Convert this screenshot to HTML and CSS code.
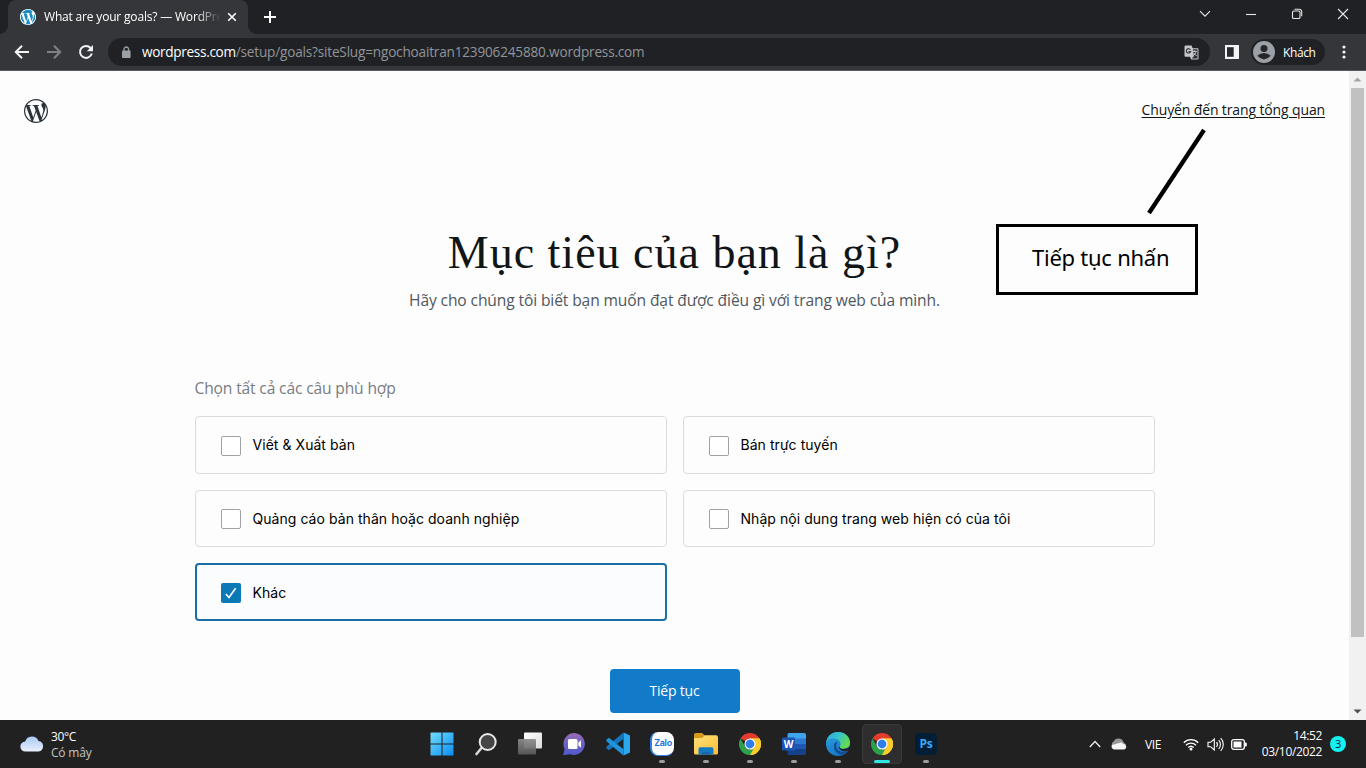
FILE: index.html
```html
<!DOCTYPE html>
<html lang="vi">
<head>
<meta charset="utf-8">
<title>What are your goals? — WordPress.com</title>
<link rel="stylesheet" href="styles.css">
</head>
<body>
<svg class="defs" width="0" height="0" aria-hidden="true">
  <defs>
    <symbol id="wp" viewBox="0 0 24 24"><path d="M21.469 6.825c.84 1.537 1.318 3.3 1.318 5.175 0 3.979-2.156 7.456-5.363 9.325l3.295-9.527c.615-1.54.82-2.771.82-3.864 0-.405-.026-.78-.07-1.11m-7.981.105c.647-.03 1.232-.105 1.232-.105.582-.075.514-.93-.067-.899 0 0-1.755.135-2.88.135-1.064 0-2.85-.15-2.85-.15-.585-.03-.661.855-.075.885 0 0 .54.061 1.125.09l1.68 4.605-2.37 7.08L5.354 6.9c.649-.03 1.234-.1 1.234-.1.585-.075.516-.93-.065-.896 0 0-1.746.138-2.874.138-.2 0-.438-.008-.69-.015C4.911 3.15 8.235 1.215 12 1.215c2.809 0 5.365 1.072 7.286 2.833-.046-.003-.091-.009-.141-.009-1.06 0-1.812.923-1.812 1.914 0 .89.513 1.643 1.06 2.531.411.72.89 1.643.89 2.977 0 .915-.354 1.994-.821 3.479l-1.075 3.585-3.9-11.61.001.014zM12 22.784c-1.059 0-2.081-.153-3.048-.437l3.237-9.406 3.315 9.087c.024.053.05.101.078.149-1.12.393-2.325.609-3.582.609M1.211 12c0-1.564.336-3.05.935-4.39L7.29 21.709C3.694 19.96 1.212 16.271 1.211 12M12 0C5.385 0 0 5.385 0 12s5.385 12 12 12 12-5.385 12-12S18.615 0 12 0"/></symbol>
    <symbol id="chrome" viewBox="0 0 24 24">
      <path fill="#e33b2e" d="M12 12 1.6 6A12 12 0 0 1 22.4 6Z"/>
      <path fill="#fccb2d" d="M12 12V6h10.4A12 12 0 0 1 12 24Z"/>
      <path fill="#fccb2d" d="M17.2 15 12 24 A12 12 0 0 0 22.4 6H12Z"/>
      <path fill="#2da04b" d="M1.6 6 6.8 15A6 6 0 0 0 12 18l4-.6.8-1.8L12 24A12 12 0 0 1 1.6 6Z"/>
      <circle cx="12" cy="12" r="6" fill="#fff"/><circle cx="12" cy="12" r="4.8" fill="#2f7de9"/>
    </symbol>
    <linearGradient id="win" x1="0" y1="0" x2="1" y2="1"><stop offset="0" stop-color="#72ddff"/><stop offset="1" stop-color="#0a8df0"/></linearGradient>
    <linearGradient id="tv1" x1="0" y1="0" x2="1" y2="1"><stop offset="0" stop-color="#fff"/><stop offset="1" stop-color="#dcdcdc"/></linearGradient>
    <linearGradient id="tv2" x1="0" y1="0" x2="0" y2="1"><stop offset="0" stop-color="#8c8c8c"/><stop offset="1" stop-color="#5a5a5a"/></linearGradient>
    <linearGradient id="chat" x1="0" y1="0" x2="0" y2="1"><stop offset="0" stop-color="#9c6bb0"/><stop offset=".5" stop-color="#6a62c6"/><stop offset="1" stop-color="#5259c8"/></linearGradient>
    <linearGradient id="cloud" x1="0" y1="0" x2="0" y2="1"><stop offset="0" stop-color="#a9c8f5"/><stop offset="1" stop-color="#e9f0fb"/></linearGradient>
    <linearGradient id="fold" x1="0" y1="0" x2="1" y2="1"><stop offset="0" stop-color="#ffe07c"/><stop offset="1" stop-color="#f9bf33"/></linearGradient>
    <linearGradient id="edgeTop" x1="0" y1="0" x2="1" y2=".5"><stop offset="0" stop-color="#2ba7e0"/><stop offset=".5" stop-color="#35c3cb"/><stop offset="1" stop-color="#66dc4f"/></linearGradient>
    <linearGradient id="edgeBody" x1="0" y1="0" x2=".6" y2="1"><stop offset="0" stop-color="#2aa3e3"/><stop offset="1" stop-color="#1673c7"/></linearGradient>
  </defs>
</svg>

<div class="screen">
  <div class="tabbar">
    <div class="tab">
      <span class="favicon"><svg width="16" height="16"><use href="#wp"/></svg></span>
      <span class="tab-title">What are your goals? — WordPre</span>
      <svg class="tab-close" width="10" height="10" viewBox="0 0 10 10"><path d="m1.2 1.2 7.6 7.6M8.8 1.2 1.2 8.8"/></svg>
    </div>
    <svg class="tab-new" width="12" height="12" viewBox="0 0 12 12"><path d="M6 0v12M0 6h12"/></svg>
    <div class="win-controls">
      <svg width="12" height="12" viewBox="0 0 12 12"><path d="m1 3.2 5 5 5-5"/></svg>
      <svg width="12" height="12" viewBox="0 0 12 12"><path d="M1 6.5h10"/></svg>
      <svg width="12" height="12" viewBox="0 0 12 12"><rect x="1.5" y="3" width="7.5" height="7.5" rx="1.3"/><path d="M3.5 1.2h4.7a2.5 2.5 0 0 1 2.5 2.5v4.6"/></svg>
      <svg width="12" height="12" viewBox="0 0 12 12"><path d="m1 1 10 10M11 1 1 11"/></svg>
    </div>
  </div>

  <div class="toolbar">
    <div class="nav">
      <svg width="16" height="16" viewBox="0 0 16 16"><path d="M15 8H2M8 1.8 1.8 8 8 14.2"/></svg>
      <svg class="dim" width="16" height="16" viewBox="0 0 16 16"><path d="M1 8h13M8 1.8 14.2 8 8 14.2"/></svg>
      <svg width="16" height="16" viewBox="0 0 16 16"><path d="M13.8 9.5A6 6 0 1 1 12.6 4"/><path class="solid" d="M15 1v6.2H8.8z"/></svg>
    </div>
    <div class="address">
      <svg class="lock" width="10" height="13" viewBox="0 0 10 13"><rect x="1" y="4.5" width="8.6" height="7.5" rx="1"/><path d="M3 5V3.3a2.3 2.3 0 0 1 4.6 0V5"/></svg>
      <span class="url"><b>wordpress.com</b>/setup/goals?siteSlug=ngochoaitran123906245880.wordpress.com</span>
      <svg class="translate" width="15" height="15" viewBox="0 0 15 15"><path fill="#c3c6ca" d="M1.5.5h6l1.2 2.7h4.8a1 1 0 0 1 1 1v9.3a1 1 0 0 1-1 1H7.2L6 11.800H1.500a1 1 0 0 1-1-1V1.500a1 1 0 0 1 1-1z"/><path fill="#303135" d="M9 4.200h4.500v9.300H7.800l2-2.200z"/><path fill="none" stroke="#303135" stroke-width="1.100" d="M6.400 4.700A2.200 2.200 0 1 0 6.600 6.600H4.600"/><path fill="none" stroke="#c3c6ca" d="M8.700 6.400h4.100M10.700 5.200v1.200M12 6.500c-.4 2-1.700 3.300-3 4.300M9.700 8l3 3"/></svg>
    </div>
    <svg class="panel" width="14" height="14" viewBox="0 0 14 14"><rect width="14" height="14" fill="#f4f5f6"/><rect x="2" y="2.200" width="6.700" height="9.600" fill="#292a2d"/></svg>
    <div class="profile">
      <svg width="22" height="22" viewBox="0 0 22 22"><circle cx="11" cy="11" r="11" fill="#9aa0a6"/><circle cx="11" cy="7.500" r="3.500" fill="#25262a"/><path d="M4.200 14.800Q11 9.300 17.800 14.800 11 22 4.200 14.800Z" fill="#25262a"/></svg>
      <span>Khách</span>
    </div>
    <svg class="dots" width="4" height="14" viewBox="0 0 4 14"><circle cx="2" cy="2" r="1.600"/><circle cx="2" cy="7" r="1.600"/><circle cx="2" cy="12" r="1.600"/></svg>
  </div>

  <div class="viewport">
    <main class="page">
      <header class="page-head">
        <svg class="logo" width="24" height="24"><use href="#wp"/></svg>
        <a class="skip">Chuyển đến trang tổng quan</a>
      </header>
      <h1 class="title">Mục tiêu của bạn là gì?</h1>
      <p class="subtitle">Hãy cho chúng tôi biết bạn muốn đạt được điều gì với trang web của mình.</p>
      <section class="goals">
        <p class="hint">Chọn tất cả các câu phù hợp</p>
        <div class="grid">
          <div class="goal"><span class="box"></span><span>Viết &amp; Xuất bản</span></div>
          <div class="goal"><span class="box"></span><span>Bán trực tuyến</span></div>
          <div class="goal"><span class="box"></span><span class="label-low">Quảng cáo bản thân hoặc doanh nghiệp</span></div>
          <div class="goal"><span class="box"></span><span class="label-low">Nhập nội dung trang web hiện có của tôi</span></div>
          <div class="goal selected"><span class="box checked"><svg width="14" height="14" viewBox="0 0 14 14"><path d="M1.800 8 5 11.500 11.600 2.300"/></svg></span><span class="label-low">Khác</span></div>
        </div>
      </section>
      <button class="continue">Tiếp tục</button>
    </main>
    <div class="scrollbar">
      <svg width="9" height="5" viewBox="0 0 9 5"><path d="M.5 4.500h8L4.500.5z" fill="#a3a3a3"/></svg>
      <div class="thumb"></div>
      <svg class="down" width="9" height="5" viewBox="0 0 9 5"><path d="M.5.500h8l-4 4z" fill="#505050"/></svg>
    </div>
    <svg class="pointer" width="64" height="92" viewBox="0 0 64 92"><path d="M60 4 5 87" stroke="#000" stroke-width="4.300"/></svg>
    <div class="note"><span>Tiếp tục nhấn</span></div>
  </div>

  <footer class="taskbar">
    <div class="weather">
      <svg width="24" height="17" viewBox="0 0 24 17"><path d="M5.500 16.500a5 5 0 0 1-.3-10A7 7 0 0 1 18.500 6a5.300 5.300 0 0 1 0 10.500z" fill="url(#cloud)"/></svg>
      <div><div class="temp">30°C</div><div class="sky">Có mây</div></div>
    </div>
    <div class="apps">
      <div class="app"><svg width="24" height="24" viewBox="0 0 24 24"><path fill="url(#win)" d="M1 .5h10.500V11.500H.5V1zM12.500.5H23l.5.500v10.500h-11zM.5 12.500h11v11H1L.5 23zM12.500 12.500h11V23l-.5.500H12.500z"/></svg></div>
      <div class="app"><svg width="24" height="24" viewBox="0 0 24 24"><path d="m7.500 16-5 6" stroke="#d8d8d8" stroke-width="2.600" stroke-linecap="round"/><circle cx="13.700" cy="10" r="8" fill="#454545" stroke="#e8e8e8" stroke-width="2"/></svg></div>
      <div class="app"><svg width="24" height="24" viewBox="0 0 24 24"><rect x="6" y=".5" width="18" height="16" rx="1" fill="url(#tv1)"/><rect y="7" width="18" height="15.500" rx="1" fill="url(#tv2)" opacity=".93"/></svg></div>
      <div class="app"><svg width="24" height="24" viewBox="0 0 24 24"><path fill="url(#chat)" d="M12.500 1A11 11 0 1 1 8 22.300L1.200 23.200 2.600 17A11 11 0 0 1 12.500 1z"/><rect x="6" y="7" width="9.500" height="10" rx="1.500" fill="#fff"/><path d="m16.300 10.500 2.700-2.300v7.600l-2.700-2.300z" fill="#fff"/></svg></div>
      <div class="app"><svg width="24" height="24" viewBox="0 0 24 24"><path d="M17.500.5 24 3.500v17l-6.500 3z" fill="#2aa9ee"/><path d="M17.500.5v6.200L3 18.300.3 16.200v-1.500z" fill="#1576bd"/><path d="M17.500 23.500v-6.200L3 5.700.3 7.800v1.500z" fill="#1f93db"/></svg></div>
      <div class="app"><div class="zalo">Zalo</div><i></i></div>
      <div class="app"><svg width="24" height="24" viewBox="0 0 24 24"><path d="M0 3a2 2 0 0 1 2-2h6l3 2.500V8H0z" fill="#d69a18"/><path d="M0 6h8l3-2.700h11a2 2 0 0 1 2 2V21a1.500 1.500 0 0 1-1.500 1.500h-21A1.500 1.500 0 0 1 0 21z" fill="url(#fold)"/><path d="M4.500 22.500V17A1.800 1.800 0 0 1 6.300 15.200h11.400A1.800 1.800 0 0 1 19.500 17v5.500z" fill="#127bc1"/><path d="M8 22.500v-1.300a1 1 0 0 1 1-1h6a1 1 0 0 1 1 1v1.300z" fill="#1565a8"/></svg><i></i></div>
      <div class="app"><svg width="22" height="22"><use href="#chrome"/></svg><i></i></div>
      <div class="app"><svg width="24" height="24" viewBox="0 0 24 24"><path fill="#3ea4ec" d="M7 1h15.500A1.500 1.500 0 0 1 24 2.500V7H5.500V2.500A1.500 1.500 0 0 1 7 1z"/><path fill="#2d79d1" d="M5.500 6.500H24V12H5.500z"/><path fill="#1d58b4" d="M5.500 12H24v5.500H5.500z"/><path fill="#17408a" d="M5.500 17.200H24v4.300a1.500 1.500 0 0 1-1.500 1.500H7a1.500 1.500 0 0 1-1.500-1.500z"/><rect y="5.500" width="13" height="13" rx="1.200" fill="#1b55b2"/><text x="6.400" y="15.500" class="word-w">W</text></svg><i></i></div>
      <div class="app"><svg width="24" height="24" viewBox="0 0 24 24"><circle cx="12" cy="12" r="12" fill="url(#edgeBody)"/><path d="M.2 10.500C1.200 4 6 0 12 0c7 0 12 5 12 10.500 0 4-3 6.200-6.300 6.200-3 0-4.200-1-4.200-1.800 0-.7 1-1 1-3 0-2.500-2.600-5.400-6.500-5.400C4 6.500 1.500 8 .2 10.500z" fill="url(#edgeTop)"/><path d="M10.500 9.500C8 11 7.500 13.500 8 16c1 4.500 5.500 7.500 10 6.500 2-1 3.600-2.500 4.400-4-6 3-11.400.500-12-3.500-.3-2.200.2-3.200.6-3.700z" fill="#134f94"/><path d="M13.500 14.500c0 2.500 5 4 10.500 0l.5.500-1.600 3.300c-4.500 2-9.400.500-10.400-3.300z" fill="#212121"/></svg><i></i></div>
      <div class="app active"><svg width="22" height="22"><use href="#chrome"/></svg><i></i></div>
      <div class="app"><div class="ps">Ps</div><i></i></div>
    </div>
    <div class="tray">
      <svg class="up" width="12" height="8" viewBox="0 0 12 8"><path d="m.8 7 5.200-5.500L11.200 7"/></svg>
      <svg class="onedrive" width="16" height="12" viewBox="0 0 16 12"><path d="M2.800 10A3.600 3.600 0 0 1 2.600 3.600 5.300 5.300 0 0 1 12.300 3.800L15 7z" fill="#969696"/><path d="M3.200 11.500a3 3 0 0 1-2.200-4.500l8-2.300c1.200-.5 2.800.2 3.400 1.300a2.800 2.800 0 0 1 .8 5.500z" fill="#f5f5f5"/></svg>
      <span class="lang">VIE</span>
      <svg class="wifi" width="16" height="13" viewBox="0 0 16 13"><path d="M.8 4.700a10.200 10.200 0 0 1 14.400 0M3 7.200a7 7 0 0 1 10 0M5.300 9.500a3.900 3.900 0 0 1 5.400 0"/><circle cx="8" cy="11" r="1.500"/></svg>
      <svg class="vol" width="17" height="15" viewBox="0 0 17 15"><path d="M1 5.300h2.600L7.300 2v11L3.600 9.700H1zM9.500 5.200a3.500 3.500 0 0 1 0 4.600M11.700 3.200a6.200 6.200 0 0 1 0 8.600M13.700 1.200a9 9 0 0 1 0 12.600"/></svg>
      <svg class="battery" width="16" height="11" viewBox="0 0 16 11"><rect x=".7" y=".7" width="12.600" height="9.600" rx="2" fill="none" stroke="#fff" stroke-width="1.300"/><rect x="2.500" y="2.500" width="8" height="6" fill="#fff"/><path d="M14 3.500h.8a1 1 0 0 1 1 1v2a1 1 0 0 1-1 1H14z" fill="#fff"/></svg>
      <div class="clock"><span class="time">14:52</span><span class="date">03/10/2022</span></div>
      <span class="badge">3</span>
    </div>
  </footer>
</div>
</body>
</html>
```
FILE: styles.css
```css
* { box-sizing: border-box; }
body { margin: 0; background: #fdfdfd; font-family: "Open Sans", "Noto Sans", sans-serif; }
p, h1 { margin: 0; font-weight: 400; }
svg { display: block; flex: none; }
span, a { white-space: nowrap; }
.defs { position: absolute; }
.screen { width: 1366px; height: 768px; display: flex; flex-direction: column; overflow: hidden; }

/* Browser chrome */
.tabbar { height: 34px; background: #202124; display: flex; align-items: stretch; padding-left: 8px; }
.tab { position: relative; width: 240px; background: #35363a; border-radius: 8px 8px 0 0; display: flex; align-items: center; padding: 0 11px 0 12px; }
.tab::before, .tab::after { content: ""; position: absolute; bottom: 0; width: 8px; height: 8px; }
.tab::before { left: -8px; background: radial-gradient(circle at 0 0, #202124 7.5px, #35363a 8px); }
.tab::after { right: -8px; background: radial-gradient(circle at 100% 0, #202124 7.5px, #35363a 8px); }
.favicon { width: 16px; height: 16px; border-radius: 50%; background: #1e8cbe; margin-right: 8px; }
.favicon svg { fill: #fff; }
.tab-title { width: 176px; color: #fff; font-size: 12px; line-height: 18px; letter-spacing: -.18px; -webkit-mask-image: linear-gradient(90deg, #000 152px, transparent 177px); mask-image: linear-gradient(90deg, #000 152px, transparent 177px); }
.tab-close { margin-left: 7px; stroke: #fff; stroke-width: 1.6; }
.tab-new { margin: 11px 0 0 16px; stroke: #fff; stroke-width: 2; }
.win-controls { margin-left: auto; padding: 8px 17px 0 0; display: flex; gap: 34px; fill: none; stroke: #e8e8e8; stroke-width: 1.1; }
.toolbar { height: 37px; background: #35363a; border-bottom: 1px solid #58595d; display: flex; align-items: center; }
.nav { display: flex; gap: 16px; padding-left: 14px; width: 108px; fill: none; stroke: #f1f3f4; stroke-width: 2; }
.nav .dim { stroke: #808186; }
.nav .solid { fill: #f1f3f4; stroke: none; }
.address { width: 1102px; height: 28px; border-radius: 14px; background: #202124; display: flex; align-items: center; padding: 0 11px 0 13px; }
.lock { fill: #9aa0a6; }
.lock path { fill: none; stroke: #9aa0a6; stroke-width: 1.3; }
.url { flex: 1; margin-left: 11px; font-size: 13.6px; line-height: 20px; letter-spacing: -.19px; color: #91959a; }
.url b { font-weight: 400; color: #fff; letter-spacing: -.32px; }
.panel { margin-left: 15px; }
.profile { margin-left: 12px; width: 74px; height: 26px; border-radius: 13px; background: #202124; display: flex; align-items: center; padding-left: 2px; gap: 8px; color: #fff; font-size: 12px; letter-spacing: -.4px; }
.dots { margin-left: 17px; fill: #f1f3f4; }

/* Page */
.viewport { position: relative; height: 649px; display: flex; }
.page { width: 1349px; background: #fdfdfd; display: flex; flex-direction: column; align-items: center; }
.page-head { width: 100%; height: 80px; padding: 0 24px; display: flex; align-items: center; justify-content: space-between; }
.logo { fill: #2c3338; }
.skip { margin-top: -2px; font-size: 14px; line-height: 20px; letter-spacing: -.13px; color: #101517; text-decoration: underline; text-underline-offset: 2px; }
.title { margin-top: 75px; height: 56px; font-family: "Liberation Serif", serif; font-size: 46px; line-height: 54px; letter-spacing: 1px; color: #101517; white-space: nowrap; }
.subtitle { margin-top: 6px; font-size: 15.6px; line-height: 24px; letter-spacing: -.12px; color: #50575e; white-space: nowrap; }
.goals { width: 960px; margin-top: 64px; }
.hint { font-size: 15.6px; line-height: 24px; letter-spacing: -.15px; color: #787c82; white-space: nowrap; }
.grid { margin-top: 16px; display: grid; grid-template-columns: 472px 472px; grid-auto-rows: 57.5px; gap: 16px; }
.goal { border: 1px solid #dcdcde; border-radius: 4px; display: flex; align-items: center; padding-left: 25px; gap: 12px; font-family: Inter, sans-serif; font-size: 14px; line-height: 20px; letter-spacing: .05px; color: #000; }
.goal.selected { border: 2px solid #1b6fa5; padding-left: 24px; background: #fafcfe; }
.label-low { padding-top: 2px; }
.box { width: 20px; height: 20px; border: 1px solid #a0a2a6; border-radius: 2px; background: #fff; flex: none; margin-top: 2px; }
.box.checked { border: 0; background: #0a79b6; padding: 3px; }
.box svg { fill: none; stroke: #fff; stroke-width: 1.6; }
.continue { margin-top: 48px; width: 130px; height: 44px; border: 0; border-radius: 4px; background: #117ac9; color: #fff; font: 14px/20px "Open Sans", sans-serif; letter-spacing: -.2px; }
.scrollbar { width: 17px; background: #f1f1f1; display: flex; flex-direction: column; align-items: center; padding-top: 6px; }
.scrollbar .thumb { width: 13px; height: 549px; margin-top: 6px; background: #c1c1c1; }
.scrollbar .down { margin: auto 0 6px; }
.pointer { position: absolute; left: 1144px; top: 55px; }
.note { position: absolute; left: 996px; top: 153px; width: 202px; height: 71px; border: 3px solid #000; background: #fdfdfd; padding: 15px 0 0 33px; font-size: 22px; line-height: 30px; letter-spacing: -.25px; color: #000; font-family: "Noto Sans", sans-serif; }

/* Taskbar */
.taskbar { height: 48px; background: #212121; display: grid; grid-template-columns: 420px 528px 1fr; color: #fff; font-size: 12px; letter-spacing: -.35px; }
.weather { display: flex; align-items: center; padding: 2px 0 0 20px; gap: 7px; line-height: 16px; }
.weather svg { margin-top: -4px; }
.sky { color: #c4c4c4; letter-spacing: -.2px; }
.apps { display: grid; grid-template-columns: repeat(12, 44px); }
.app { position: relative; display: flex; align-items: center; justify-content: center; }
.app i { position: absolute; bottom: 5px; left: 19px; width: 6px; height: 3px; border-radius: 2px; background: #9c9c9c; }
.app.active { background: #2e2e2e; border: 1px solid #393939; border-radius: 4px; margin: 4px 2px; }
.app.active i { width: 16px; left: 11px; bottom: 0; background: #2ee6e2; }
.zalo { width: 24px; height: 24px; border-radius: 8px; background: #fff; border-left: 2px solid #2c7dea; border-bottom: 1px solid #2c7dea; color: #1668dc; font: 600 9px/22px Inter, sans-serif; text-align: center; letter-spacing: -.3px; }
.word-w { fill: #fff; font: 700 10px "Open Sans", sans-serif; text-anchor: middle; }
.ps { width: 22px; height: 22px; border-radius: 4px; background: #001e36; color: #3aa8fb; font: 700 12px/21px "Open Sans", sans-serif; text-align: center; }
.tray { display: flex; align-items: center; padding-left: 141px; }
.up { fill: none; stroke: #f0f0f0; stroke-width: 1.3; }
.onedrive { margin-left: 10px; }
.lang { margin-left: 18px; width: 17px; }
.wifi { margin-left: 21px; fill: none; stroke: #fff; stroke-width: 1.3; }
.wifi circle { fill: #fff; stroke: none; }
.vol { margin-left: 8px; fill: none; stroke: #fff; stroke-width: 1.1; }
.battery { margin-left: 7px; }
.clock { margin-left: auto; margin-right: 8px; display: flex; flex-direction: column; align-items: flex-end; line-height: 16px; }
.badge { width: 16px; height: 16px; margin-right: 20px; border-radius: 50%; background: #14f1f1; color: #123; text-align: center; font-size: 11px; line-height: 16px; }
```
